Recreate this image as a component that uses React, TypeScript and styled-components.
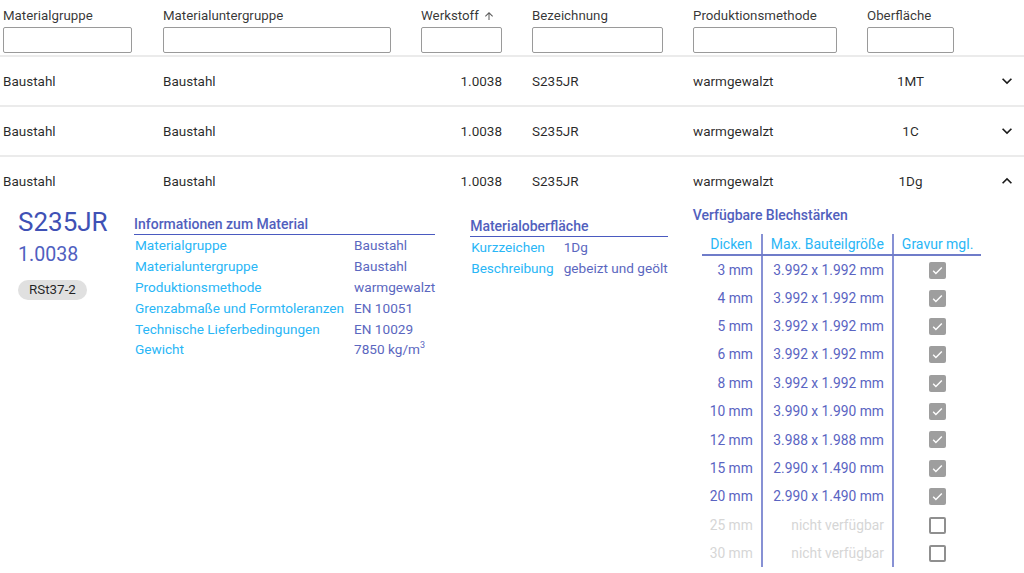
import styled, { createGlobalStyle } from "styled-components";

const GlobalStyle = createGlobalStyle`
  * {
    box-sizing: border-box;
  }

  body {
    margin: 0;
    background: #ffffff;
    font-family: Roboto, "Noto Sans", "Liberation Sans", sans-serif;
    color: rgba(0, 0, 0, 0.87);
  }
`;

const COLS = "160px 258px 111px 161px 174px 120px 1fr";

const Page = styled.div`
  width: 1024px;
  height: 573px;
  overflow: hidden;
  padding-left: 3px;
`;

const HeaderRow = styled.div`
  display: grid;
  grid-template-columns: ${COLS};
  height: 57px;
  padding-top: 8px;
  border-bottom: 2px solid #ebebeb;
  margin-left: -3px;
  padding-left: 3px;
`;

const HeaderCell = styled.div`
  display: flex;
  flex-direction: column;
  gap: 3px;
`;

const HeaderLabel = styled.div`
  font-size: 13.3px;
  line-height: 16px;
  color: rgba(0, 0, 0, 0.8);
  display: flex;
  align-items: center;
  gap: 4px;
`;

const FilterInput = styled.input<{ $w: number }>`
  width: ${(p) => p.$w}px;
  height: 26px;
  border: 1px solid #9a9a9a;
  border-radius: 2px;
  font-family: inherit;
  padding: 0 4px;
  outline: none;
`;

const Row = styled.div<{ $open?: boolean }>`
  display: grid;
  grid-template-columns: ${COLS};
  align-items: center;
  height: ${(p) => (p.$open ? 48 : 50)}px;
  border-bottom: ${(p) => (p.$open ? "none" : "2px solid #ebebeb")};
  margin-left: -3px;
  padding-left: 3px;
  font-size: 13.5px;
  color: rgba(0, 0, 0, 0.85);
`;

const Cell = styled.div<{ $w?: number; $align?: string }>`
  width: ${(p) => (p.$w ? `${p.$w}px` : "auto")};
  text-align: ${(p) => p.$align || "left"};
`;

const Toggle = styled.div`
  padding-left: 10px;
  display: flex;
  align-items: center;
  color: #1a1a1a;
`;

/* expanded detail */

const Detail = styled.div`
  display: flex;
  align-items: flex-start;
  padding-left: 15px;
`;

const Identity = styled.div`
  width: 116px;
  padding-top: 2px;
  color: #3f51b5;
`;

const Title = styled.div`
  font-size: 26px;
  line-height: 30px;
`;

const Number = styled.div`
  font-size: 19.6px;
  line-height: 24px;
  margin-top: 6px;
  color: #5060c0;
`;

const Chip = styled.span`
  display: inline-block;
  margin-top: 13px;
  height: 20px;
  line-height: 20px;
  padding: 0 11px;
  border-radius: 10px;
  background: #e0e0e0;
  color: rgba(0, 0, 0, 0.85);
  font-size: 13.4px;
`;

const InfoTable = styled.table<{ $top: number; $ml: number }>`
  border-collapse: collapse;
  margin-top: ${(p) => p.$top}px;
  margin-left: ${(p) => p.$ml}px;
  font-size: 13.6px;

  caption {
    text-align: left;
    font-size: 14px;
    font-weight: 500;
    line-height: 20px;
    color: #5160bd;
    border-bottom: 1.5px solid #4a5ac0;
    padding-left: 0;
  }

  td {
    height: 20.8px;
    padding: 0 6px 0 1px;
    white-space: nowrap;
    vertical-align: middle;
  }

  td:first-child {
    color: #29b6f6;
    padding-right: 9px;
  }

  td:last-child {
    color: #5b67c0;
    padding-right: 0;
  }

  sup {
    font-size: 9px;
    line-height: 0;
  }
`;

const Sheets = styled.div`
  margin-left: 25px;
  padding-top: 1px;
`;

const SheetsTitle = styled.div`
  font-size: 14px;
  font-weight: 500;
  line-height: 18px;
  color: #5160bd;
`;

const SheetTable = styled.table`
  border-collapse: collapse;
  margin-top: 10px;
  margin-left: 9px;
  font-size: 13.8px;

  th {
    height: 21px;
    padding: 0 8px;
    font-size: 14px;
    font-weight: 400;
    color: #29b6f6;
    white-space: nowrap;
    border-bottom: 2px solid #6f7cc9;
  }

  th:nth-child(1),
  th:nth-child(2),
  td:nth-child(1),
  td:nth-child(2) {
    border-right: 2px solid #8791d4;
  }

  td {
    height: 28.4px;
    padding: 0 8px;
    white-space: nowrap;
    text-align: right;
  }

  td:nth-child(3) {
    text-align: center;
  }
`;

const SheetRow = styled.tr<{ $off?: boolean }>`
  color: ${(p) => (p.$off ? "#d6d6d6" : "#5a64c2")};
`;

const Check = styled.span<{ $on?: boolean }>`
  display: inline-flex;
  align-items: center;
  justify-content: center;
  width: 17px;
  height: 17px;
  border-radius: 2px;
  vertical-align: middle;
  background: ${(p) => (p.$on ? "#9e9e9e" : "#fff")};
  border: ${(p) => (p.$on ? "none" : "2px solid #8f8f8f")};
`;

const Chevron = ({ up }: { up?: boolean }) => (
  <svg width="20" height="20" viewBox="0 0 24 24" fill="currentColor">
    {up ? (
      <path d="M7.41 15.41L12 10.83l4.59 4.58L18 14l-6-6-6 6z" />
    ) : (
      <path d="M16.59 8.59L12 13.17 7.41 8.59 6 10l6 6 6-6z" />
    )}
  </svg>
);

const SortArrow = () => (
  <svg width="12" height="12" viewBox="0 0 24 24" fill="#5a5a5a">
    <path d="M4 12l1.41 1.41L11 7.83V20h2V7.83l5.58 5.59L20 12l-8-8-8 8z" />
  </svg>
);

const Tick = () => (
  <svg width="13" height="13" viewBox="0 0 24 24" fill="none" stroke="#fff" strokeWidth="2.6">
    <path d="M4 12.5l5 5L20 6.5" />
  </svg>
);

const filters = [
  { label: "Materialgruppe", w: 129 },
  { label: "Materialuntergruppe", w: 228 },
  { label: "Werkstoff", w: 81, sort: true },
  { label: "Bezeichnung", w: 131 },
  { label: "Produktionsmethode", w: 144 },
  { label: "Oberfläche", w: 87 },
];

const rows = [
  { surface: "1MT", open: false },
  { surface: "1C", open: false },
  { surface: "1Dg", open: true },
];

const sheets = [
  { d: "3 mm", size: "3.992 x 1.992 mm", ok: true },
  { d: "4 mm", size: "3.992 x 1.992 mm", ok: true },
  { d: "5 mm", size: "3.992 x 1.992 mm", ok: true },
  { d: "6 mm", size: "3.992 x 1.992 mm", ok: true },
  { d: "8 mm", size: "3.992 x 1.992 mm", ok: true },
  { d: "10 mm", size: "3.990 x 1.990 mm", ok: true },
  { d: "12 mm", size: "3.988 x 1.988 mm", ok: true },
  { d: "15 mm", size: "2.990 x 1.490 mm", ok: true },
  { d: "20 mm", size: "2.990 x 1.490 mm", ok: true },
  { d: "25 mm", size: "nicht verfügbar", ok: false },
  { d: "30 mm", size: "nicht verfügbar", ok: false },
];

const App = () => {
  return (
    <>
      <GlobalStyle />
      <Page>
        <HeaderRow>
          {filters.map((f) => (
            <HeaderCell key={f.label}>
              <HeaderLabel>
                {f.label}
                {f.sort && <SortArrow />}
              </HeaderLabel>
              <FilterInput $w={f.w} />
            </HeaderCell>
          ))}
        </HeaderRow>

        {rows.map((r) => (
          <Row key={r.surface} $open={r.open}>
            <Cell>Baustahl</Cell>
            <Cell>Baustahl</Cell>
            <Cell $w={81} $align="right">
              1.0038
            </Cell>
            <Cell>S235JR</Cell>
            <Cell>warmgewalzt</Cell>
            <Cell $w={87} $align="center">
              {r.surface}
            </Cell>
            <Toggle>
              <Chevron up={r.open} />
            </Toggle>
          </Row>
        ))}

        {/* Details of the open row */}

        <Detail>
          <Identity>
            <Title>S235JR</Title>
            <Number>1.0038</Number>
            <Chip>RSt37-2</Chip>
          </Identity>

          <InfoTable $top={9} $ml={0}>
            <caption>Informationen zum Material</caption>
            <tbody>
              <tr>
                <td>Materialgruppe</td>
                <td>Baustahl</td>
              </tr>
              <tr>
                <td>Materialuntergruppe</td>
                <td>Baustahl</td>
              </tr>
              <tr>
                <td>Produktionsmethode</td>
                <td>warmgewalzt</td>
              </tr>
              <tr>
                <td>Grenzabmaße und Formtoleranzen</td>
                <td>EN 10051</td>
              </tr>
              <tr>
                <td>Technische Lieferbedingungen</td>
                <td>EN 10029</td>
              </tr>
              <tr>
                <td>Gewicht</td>
                <td>
                  7850 kg/m<sup>3</sup>
                </td>
              </tr>
            </tbody>
          </InfoTable>

          <InfoTable $top={11} $ml={35}>
            <caption>Materialoberfläche</caption>
            <tbody>
              <tr>
                <td>Kurzzeichen</td>
                <td>1Dg</td>
              </tr>
              <tr>
                <td>Beschreibung</td>
                <td>gebeizt und geölt</td>
              </tr>
            </tbody>
          </InfoTable>

          <Sheets>
            <SheetsTitle>Verfügbare Blechstärken</SheetsTitle>
            <SheetTable>
              <thead>
                <tr>
                  <th>Dicken</th>
                  <th>Max. Bauteilgröße</th>
                  <th>Gravur mgl.</th>
                </tr>
              </thead>
              <tbody>
                {sheets.map((s) => (
                  <SheetRow key={s.d} $off={!s.ok}>
                    <td>{s.d}</td>
                    <td>{s.size}</td>
                    <td>
                      <Check $on={s.ok}>{s.ok && <Tick />}</Check>
                    </td>
                  </SheetRow>
                ))}
              </tbody>
            </SheetTable>
          </Sheets>
        </Detail>
      </Page>
    </>
  );
};

export default App;
